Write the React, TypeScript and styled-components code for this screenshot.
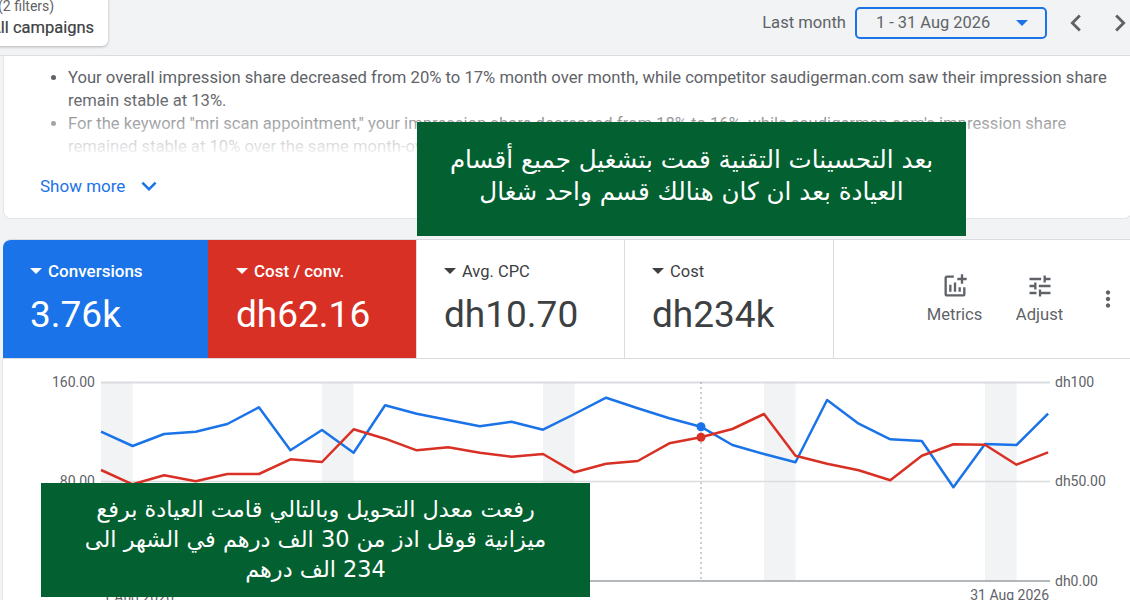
import styled, { createGlobalStyle } from "styled-components"
import { MdMoreVert, MdOutlineAddchart, MdTune, MdKeyboardArrowDown, MdChevronLeft, MdChevronRight } from "react-icons/md"

const GlobalStyle = createGlobalStyle`
  html, body { margin: 0; padding: 0; background: #f1f3f4; }
  body { font-family: Roboto, "Liberation Sans", sans-serif; color: #5f6368; }
`

const STEP = 31.57
const START = 101
const blue = [431.7, 446, 434, 431.7, 424, 407.3, 450.3, 430, 452.7, 405.3, 413.7, 420, 426.3, 421.7, 429.7, 414, 397.7, 408.3, 418.3, 426.7, 445, 454, 462.3, 400, 423.7, 439.3, 441, 487.3, 444, 445, 413.7]
const red = [470, 484.3, 475.3, 481.3, 474, 474, 459.3, 462, 429.3, 438.7, 450.3, 447.3, 452.7, 456.7, 454, 472.3, 463.7, 461, 443.3, 437.3, 429, 414, 455.7, 463.7, 470.3, 480.3, 455.7, 444.3, 444.7, 464.7, 452.3]
const weekends = [0, 7, 14, 21, 28]

const toPoints = (values: number[]) =>
  values.map((y, i) => `${(START + i * STEP).toFixed(1)},${y}`).join(" ")

const tiles = [
  { label: "Conversions", value: "3.76k", tone: "blue" },
  { label: "Cost / conv.", value: "dh62.16", tone: "red" },
  { label: "Avg. CPC", value: "dh10.70", tone: "plain" },
  { label: "Cost", value: "dh234k", tone: "plain" },
]

export default function App() {
  return (
    <Page>
      <GlobalStyle />
      <TopBar>
        <FilterCard>
          <FilterCount>(2 filters)</FilterCount>
          <FilterName>All campaigns</FilterName>
        </FilterCard>
        <DateControls>
          <DateLabel>Last month</DateLabel>
          <DateBox>
            1 - 31 Aug 2026
            <Caret $color="#1a73e8" />
          </DateBox>
          <NavButtons>
            <MdChevronLeft size={34} />
            <MdChevronRight size={34} />
          </NavButtons>
        </DateControls>
      </TopBar>

      <InsightCard>
        <InsightList>
          <li>
            Your overall impression share decreased from 20% to 17% month over month, while competitor saudigerman.com saw their impression share remain stable at 13%.
          </li>
          <li>
            For the keyword "mri scan appointment," your impression share decreased from 18% to 16%, while saudigerman.com's impression share remained stable at 10% over the same month-over-month period.
          </li>
        </InsightList>
        <ShowMore>
          Show more
          <MdKeyboardArrowDown size={30} />
        </ShowMore>
      </InsightCard>

      <ScorePanel>
        {tiles.map((tile) => (
          <Tile key={tile.label} $tone={tile.tone}>
            <TileLabel $tone={tile.tone}>
              <Caret $color={tile.tone === "plain" ? "#3c4043" : "#fff"} />
              {tile.label}
            </TileLabel>
            <TileValue>{tile.value}</TileValue>
          </Tile>
        ))}
        <Actions>
          <ActionButton>
            <MdOutlineAddchart size={28} />
            Metrics
          </ActionButton>
          <ActionButton>
            <MdTune size={28} />
            Adjust
          </ActionButton>
          <Kebab>
            <MdMoreVert size={26} />
          </Kebab>
        </Actions>
      </ScorePanel>

      <ChartPanel>
        <svg width="1127" height="241" viewBox="3 359 1127 241">
          {weekends.map((i) => (
            <rect key={i} x={START + i * STEP} y="382" width={STEP} height="199" fill="#f1f3f4" />
          ))}
          <line x1="101" x2="1050" y1="382.5" y2="382.5" stroke="#dadce0" strokeWidth="2" />
          <line x1="101" x2="1050" y1="481.5" y2="481.5" stroke="#dadce0" strokeWidth="1.5" />
          <line x1="101" x2="1050" y1="581" y2="581" stroke="#9aa0a6" strokeWidth="1.5" />
          <line x1="701" x2="701" y1="382" y2="581" stroke="#9aa0a6" strokeDasharray="2 3" />
          <polyline points={toPoints(blue)} fill="none" stroke="#1a73e8" strokeWidth="2.5" strokeLinejoin="round" />
          <polyline points={toPoints(red)} fill="none" stroke="#d93025" strokeWidth="2.5" strokeLinejoin="round" />
          <circle cx="701" cy="426.7" r="4.5" fill="#1a73e8" />
          <circle cx="701" cy="437.3" r="4.5" fill="#d93025" />
          <AxisText x="95" y="387" textAnchor="end">160.00</AxisText>
          <AxisText x="95" y="486" textAnchor="end">80.00</AxisText>
          <AxisText x="1055" y="387">dh100</AxisText>
          <AxisText x="1055" y="486">dh50.00</AxisText>
          <AxisText x="1055" y="586">dh0.00</AxisText>
          <AxisText x="103" y="602">1 Aug 2026</AxisText>
          <AxisText x="1049" y="600" textAnchor="end">31 Aug 2026</AxisText>
        </svg>
      </ChartPanel>

      <Callout $top={122} $left={417} $lineHeight={32} $paddingTop={22} $fontSize={24.6}>
        بعد التحسينات التقنية قمت بتشغيل جميع أقسام
        <br />
        العيادة بعد ان كان هنالك قسم واحد شغال
      </Callout>
      <Callout $top={483} $left={41} $lineHeight={30} $paddingTop={11} $fontSize={22.4}>
        رفعت معدل التحويل وبالتالي قامت العيادة برفع
        <br />
        ميزانية قوقل ادز من 30 الف درهم في الشهر الى
        <br />
        234 الف درهم
      </Callout>
    </Page>
  )
}

const Page = styled.div`
  position: relative;
  width: 1130px;
  height: 600px;
  overflow: hidden;
  background: #f1f3f4;
`

const TopBar = styled.header`
  display: flex;
  justify-content: space-between;
  align-items: flex-start;
  height: 55px;
  border-bottom: 1px solid #dadce0;
  box-sizing: content-box;
`

const FilterCard = styled.div`
  display: flex;
  flex-direction: column;
  width: 138px;
  height: 51px;
  margin: -5px 0 0 -30px;
  padding-left: 20px;
  background: #fff;
  border-radius: 6px;
  box-shadow: 0 1px 3px rgba(60, 64, 67, 0.35);
  box-sizing: border-box;
`

const FilterCount = styled.span`
  margin-left: 8px;
  font-size: 14px;
  line-height: 22px;
  color: #5f6368;
`

const FilterName = styled.span`
  font-size: 16.5px;
  line-height: 22px;
  color: #3c4043;
  white-space: nowrap;
  -webkit-text-stroke: 0.2px #3c4043;
`

const DateControls = styled.div`
  display: flex;
  align-items: center;
  height: 31px;
  margin-top: 7px;
  margin-right: -7px;
`

const DateLabel = styled.span`
  margin-right: 9px;
  font-size: 16.6px;
  color: #5f6368;
`

const DateBox = styled.div`
  display: flex;
  align-items: center;
  justify-content: space-between;
  width: 192px;
  height: 32px;
  padding: 0 17px 0 19px;
  border: 2px solid #1a73e8;
  border-radius: 5px;
  font-size: 16.4px;
  color: #5f6368;
  box-sizing: border-box;
`

const NavButtons = styled.div`
  display: flex;
  gap: 10px;
  margin-left: 12px;
  color: #5f6368;
`

const Caret = styled.span<{ $color: string }>`
  display: inline-block;
  width: 0;
  height: 0;
  border-left: 6px solid transparent;
  border-right: 6px solid transparent;
  border-top: 6px solid ${(props) => props.$color};
`

const InsightCard = styled.section`
  height: 163px;
  margin: 0 -2px 0 3px;
  background: #fff;
  border: 1px solid #e3e5e8;
  border-top: 0;
  border-radius: 0 0 8px 8px;
  box-sizing: border-box;
`

const InsightList = styled.ul`
  position: relative;
  width: 1050px;
  height: 92px;
  margin: 0;
  padding: 10px 0 0 64px;
  font-size: 16.64px;
  line-height: 23px;
  color: #5f6368;
  overflow: hidden;
  box-sizing: content-box;

  &::after {
    content: "";
    position: absolute;
    left: 0;
    right: 0;
    bottom: 0;
    height: 60px;
    background: linear-gradient(rgba(255, 255, 255, 0), #fff);
  }
`

const ShowMore = styled.div`
  display: flex;
  align-items: center;
  gap: 9px;
  margin: 17px 0 0 36px;
  height: 22px;
  font-size: 17px;
  color: #1a73e8;
`

const ScorePanel = styled.section`
  display: grid;
  grid-template-columns: 205px 209px 208px 209px 1fr;
  height: 119px;
  margin: 20px 0 0 3px;
  background: #fff;
  border-top: 1px solid #dadce0;
  border-radius: 8px 0 0 0;
  overflow: hidden;
  box-sizing: border-box;
`

const Tile = styled.div<{ $tone: string }>`
  padding: 21px 0 0 ${(props) => (props.$tone === "red" ? "28px" : "27px")};
  color: ${(props) => (props.$tone === "plain" ? "#3c4043" : "#fff")};
  background: ${(props) =>
    props.$tone === "blue" ? "#1a73e8" : props.$tone === "red" ? "#d93025" : "#fff"};
  border-right: ${(props) => (props.$tone === "blue" ? "0" : "1px solid #dadce0")};
`

const TileLabel = styled.div<{ $tone: string }>`
  display: flex;
  align-items: center;
  gap: 6px;
  height: 20px;
  margin-bottom: 1px;
  font-size: ${(props) => (props.$tone === "plain" ? "16.5px" : "17px")};
  font-weight: ${(props) => (props.$tone === "plain" ? 400 : 500)};
`

const TileValue = styled.div`
  margin-top: 12px;
  font-size: 37px;
  line-height: 44px;
`

const Actions = styled.div`
  display: flex;
  align-items: center;
  padding-left: 78px;
  color: #5f6368;
`

const ActionButton = styled.div`
  display: flex;
  flex-direction: column;
  align-items: center;
  gap: 5px;
  width: 85px;
  margin-top: -2px;
  font-size: 16.6px;
`

const Kebab = styled.div`
  display: flex;
  margin-left: 13px;
`

const ChartPanel = styled.section`
  margin-left: 3px;
  height: 241px;
  background: #fff;
  border-top: 1px solid #dadce0;
  box-shadow: -1px 0 0 #e3e5e8;
`

const AxisText = styled.text`
  font-family: Roboto, "Liberation Sans", sans-serif;
  font-size: 14px;
  fill: #5f6368;
`

const Callout = styled.div<{ $top: number; $left: number; $lineHeight: number; $paddingTop: number; $fontSize: number }>`
  position: absolute;
  top: ${(props) => props.$top}px;
  left: ${(props) => props.$left}px;
  width: 549px;
  height: 114px;
  padding-top: ${(props) => props.$paddingTop}px;
  font-family: "DejaVu Sans", sans-serif;
  font-size: ${(props) => props.$fontSize}px;
  line-height: ${(props) => props.$lineHeight}px;
  text-align: center;
  direction: rtl;
  color: #fff;
  background: #036030;
  box-sizing: border-box;
`
